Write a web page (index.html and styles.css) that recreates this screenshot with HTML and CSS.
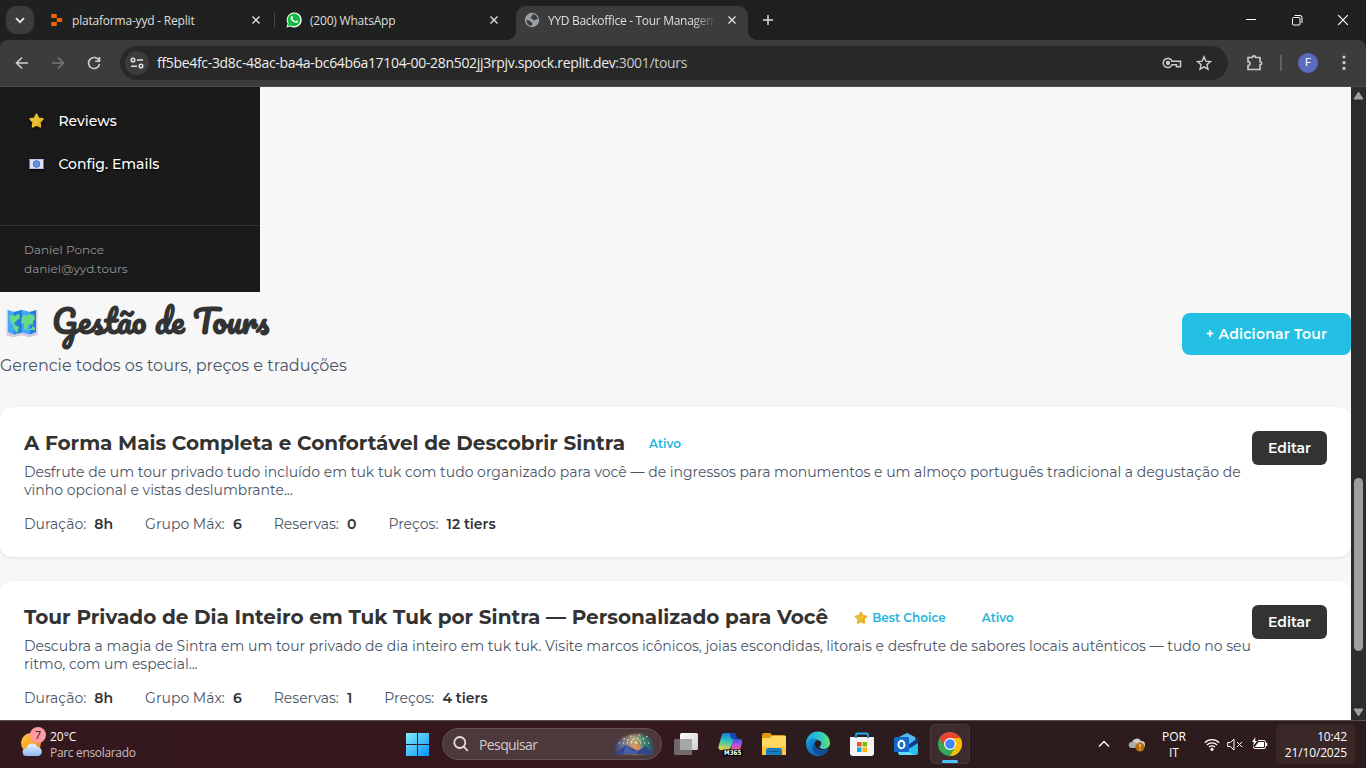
FILE: index.html
```html
<!DOCTYPE html>
<html lang="pt">
<head>
<meta charset="utf-8">
<title>YYD Backoffice - Tour Management</title>
<link rel="stylesheet" href="styles.css">
</head>
<body>
<svg class="defs" width="0" height="0">
  <defs>
    <symbol id="star" viewBox="0 0 16 16"><path d="M8 1.500 9.900 5.400l4.300.7-3 3.100.6 4.500L8 11.900l-3.800 1.800.6-4.500-3-3.100 4.300-.7z" fill="#ecc12f" stroke="#e6b92c" stroke-width="2" stroke-linejoin="round"/><path d="m12 6.200 3-.2-3.300 3.300.7 5L8 12.600" fill="#d79d2d" opacity=".4"/></symbol>
    <symbol id="x" viewBox="0 0 10 10"><path d="m1.500 1.500 7 7m0-7-7 7" stroke="currentColor" stroke-width="1.400"/></symbol>
  </defs>
</svg>
<header class="tabstrip">
  <div class="tab-search"><svg width="10" height="7" viewBox="0 0 10 7"><path d="m1 1.200 4 4 4-4" fill="none" stroke="#e6e6e6" stroke-width="1.800"/></svg></div>
  <div class="tab">
    <svg class="favicon small" viewBox="0 0 12 12"><path d="M1.200 0h3.600a1 1 0 0 1 1 1v3h-4.600a1 1 0 0 1-1-1V1a1 1 0 0 1 1-1M5.800 4h4.400a1 1 0 0 1 1 1v2a1 1 0 0 1-1 1H5.800M1.200 8h4.600v3a1 1 0 0 1-1 1H1.200a1 1 0 0 1-1-1V9a1 1 0 0 1 1-1" fill="#f26207"/></svg>
    <span class="tab-title t1">plataforma-yyd - Replit</span><svg class="close"><use href="#x"/></svg>
  </div>
  <i class="tab-sep"></i>
  <div class="tab second">
    <svg class="favicon" viewBox="0 0 16 16"><path d="M.5 15.500 1.600 11.500A7.500 7.500 0 1 1 4.600 14.500z" fill="#fff"/><path d="m1.800 14.200.8-3A6.300 6.300 0 1 1 4.900 13.400z" fill="#0fbd3d"/><path d="M5.500 4.200c.8-.7 1.200.2 1.500 1.100.1.500-.6.800-.5 1.200.7 1.400 1.500 2.100 2.900 2.700.5.100.8-.9 1.300-.8 1.800.8 1.600 1 .8 2.100C9.500 12 4.300 8.700 4.600 5.800c.1-.6.400-1.200.9-1.600" fill="#fff"/></svg>
    <span class="tab-title t2">(200) WhatsApp</span><svg class="close"><use href="#x"/></svg>
  </div>
  <div class="tab active">
    <svg class="favicon" viewBox="0 0 16 16"><circle cx="8" cy="8" r="7.200" fill="#9aa0a6"/><path d="M8.200 2.300c2.900 0 5.200 2 5.700 4.600-1 .7-2.300 0-2.600.9-.4 1.300-2.300.8-2.400-.6-.6-1-2.500-.3-2.400-1.700 0-1 1.600-.5 1.800-1.500zM2.300 8c2 .2 4.100.6 4.400 2 .4.900 2 .6 1.900 1.800-.1.900-1 1.200-1 2C4.600 13.600 2.300 11 2.300 8" fill="#3c3c3c"/></svg>
    <span class="tab-title fade t3">YYD Backoffice - Tour Managem</span><svg class="close"><use href="#x"/></svg>
  </div>
  <svg class="plus" viewBox="0 0 12 12"><path d="M6 1v10M1 6h10" stroke="#dcdcdc" stroke-width="1.500"/></svg>
  <div class="win">
    <svg width="12" height="12" viewBox="0 0 12 12"><path d="M1 5.500h10" stroke="#fff"/></svg>
    <svg width="12" height="12" viewBox="0 0 12 12" fill="none" stroke="#fff"><rect x="1.500" y="3.500" width="7.500" height="7.500" rx="1"/><path d="M3.500 1.500h5.500a2 2 0 0 1 2 2V9"/></svg>
    <svg width="12" height="12" viewBox="0 0 12 12"><path d="m1.200 1.200 9.600 9.600m0-9.600-9.600 9.600" stroke="#fff" stroke-width="1.200"/></svg>
  </div>
</header>
<div class="toolbar-back"><nav class="toolbar">
  <svg class="nav" viewBox="0 0 14 14" stroke="#d0d0d0"><path d="M13 7H1.500M7 1.500 1.500 7 7 12.500"/></svg>
  <svg class="nav" viewBox="0 0 14 14" stroke="#777"><path d="M1 7h11.500M7 1.500 12.500 7 7 12.500"/></svg>
  <svg class="nav" viewBox="0 0 14 14" stroke="#d0d0d0"><path d="M12 4.500A5.500 5.500 0 1 0 12.500 8M12.500 1v4.300H8.200"/></svg>
  <div class="omnibox">
    <span class="tune"><svg width="14" height="12" viewBox="0 0 14 12" fill="none" stroke="#e0e0e0" stroke-width="1.500"><circle cx="3" cy="3" r="1.800"/><path d="M7 3h6M1 9.200h6"/><circle cx="11" cy="9" r="1.800"/></svg></span>
    <span class="url">ff5be4fc-3d8c-48ac-ba4a-bc64b6a17104-00-28n502jj3rpjv.spock.replit.dev<em>:3001/tours</em></span>
    <svg class="key" viewBox="0 0 20 12" fill="none" stroke="#ccc" stroke-width="1.500"><path d="M10 4.200h8.500v5.600h-4v-2H10a4.600 4.600 0 1 1 0-3.600z"/><circle cx="6" cy="6" r="1.400" fill="#ccc"/></svg>
    <svg class="fav" viewBox="0 0 16 16" fill="none" stroke="#ccc" stroke-width="1.400"><path d="m8 1.800 1.800 4.300 4.700.4-3.600 3.100 1.100 4.600L8 11.800l-4 2.400 1.100-4.600-3.600-3.100 4.700-.4z"/></svg>
  </div>
  <svg class="ext" viewBox="0 0 18 18" fill="none" stroke="#ccc" stroke-width="1.600"><path d="M2 3.500h4.300a1.600 1.600 0 0 1 3.200 0H14v4.200a1.600 1.600 0 0 1 0 3.200V15.500H2v-3.900a2 2 0 0 0 0-4z"/></svg>
  <i class="bar-sep"></i><span class="avatar">F</span>
  <svg class="dots" viewBox="0 0 4 16" fill="#ccc"><circle cx="2" cy="2" r="1.600"/><circle cx="2" cy="7.700" r="1.600"/><circle cx="2" cy="13.400" r="1.600"/></svg>
</nav></div>
<div class="viewport">
  <div class="page">
    <aside class="sidebar">
      <ul class="menu">
        <li><svg class="emoji star"><use href="#star"/></svg><span>Reviews</span></li>
        <li><svg class="emoji" viewBox="0 0 16 16"><path d="M1 3h14v10H1z" fill="#e4dcf3"/><path d="M1 3h14v1H1zm0 9h14v1H1z" fill="#cdb9df"/><circle cx="8" cy="8" r="3.700" fill="#4d7fd0"/><circle cx="8" cy="8" r="1.500" fill="none" stroke="#94a9ea"/></svg><span>Config. Emails</span></li>
      </ul>
      <div class="user"><span>Daniel Ponce</span><span>daniel@yyd.tours</span></div>
    </aside>
    <main>
      <div class="head">
        <div>
          <h1><svg class="map" viewBox="0 0 32 28"><path d="m.5.800 7 2 8-2 8 2 8-2v25l-8 2.500-8-2-8 2-7-2z" fill="#d5c8e1"/><path d="m2 1 6 2v22.500L2 23zm14 0 8 2v22.500l-8-2z" fill="#43a9f4"/><path d="m8 3 8-2v22.500l-8 2zm16 0 6-2v22l-6 2.500z" fill="#2181df"/><path d="m3 7 4-1 3 1 1-2 3 1-1 4-2 1-1 2h-2l1 3 2 1 2 1-1 4-2 2-2-4-1-4-2-3-1-2zM16 8l2-2 3 1 3-2 4 1 1 4-2 2v3l-2 1-2-2-1 4-2 3-2-1v-5l-3-1zm8 12 2-1v-2l3 2v2h-5z" fill="#68d985"/></svg><span>Gestão de Tours</span></h1>
          <p class="sub">Gerencie todos os tours, preços e traduções</p>
        </div>
        <button class="add">+ Adicionar Tour</button>
      </div>
      <section class="card">
        <div class="title"><h2>A Forma Mais Completa e Confortável de Descobrir Sintra</h2><span class="tag">Ativo</span></div>
        <p class="desc">Desfrute de um tour privado tudo incluído em tuk tuk com tudo organizado para você — de ingressos para monumentos e um almoço português tradicional a degustação de<br>vinho opcional e vistas deslumbrante...</p>
        <div class="meta"><div>Duração: <b>8h</b></div><div>Grupo Máx: <b>6</b></div><div>Reservas: <b>0</b></div><div>Preços: <b>12 tiers</b></div></div>
        <button class="edit">Editar</button>
      </section>
      <section class="card">
        <div class="title"><h2>Tour Privado de Dia Inteiro em Tuk Tuk por Sintra — Personalizado para Você</h2><span class="tag best"><svg><use href="#star"/></svg>Best Choice</span><span class="tag">Ativo</span></div>
        <p class="desc">Descubra a magia de Sintra em um tour privado de dia inteiro em tuk tuk. Visite marcos icônicos, joias escondidas, litorais e desfrute de sabores locais autênticos — tudo no seu<br>ritmo, com um especial...</p>
        <div class="meta"><div>Duração: <b>8h</b></div><div>Grupo Máx: <b>6</b></div><div>Reservas: <b>1</b></div><div>Preços: <b>4 tiers</b></div></div>
        <button class="edit">Editar</button>
      </section>
    </main>
  </div>
  <div class="scroll"><svg width="11" height="9" viewBox="0 0 11 9"><path d="M5.500 1 10 8H1z" fill="#9f9f9f" stroke="#9f9f9f" stroke-linejoin="round"/></svg><i class="thumb"></i><svg width="11" height="9" viewBox="0 0 11 9"><path d="M5.500 8 10 1H1z" fill="#9f9f9f" stroke="#9f9f9f" stroke-linejoin="round"/></svg></div>
</div>
<footer class="taskbar">
  <div class="weather">
    <div class="wicon"><svg width="26" height="28" viewBox="0 0 26 28"><defs><linearGradient id="sun" y2="1"><stop stop-color="#ffc83c"/><stop offset="1" stop-color="#f5831f"/></linearGradient><linearGradient id="cl" x2="0" y2="1"><stop stop-color="#e9f3ff"/><stop offset="1" stop-color="#8fb6f2"/></linearGradient></defs><circle cx="11" cy="12" r="10" fill="url(#sun)"/><path d="M6.500 25a3.900 3.900 0 0 1 0-7.800 5.800 5.800 0 0 1 11-1.200A4.600 4.600 0 0 1 18.500 25z" fill="url(#cl)"/></svg><span class="badge">7</span></div>
    <div class="wtext"><span>20°C</span><span class="w2">Parc ensolarado</span></div>
  </div>
  <div class="apps">
    <svg class="start" viewBox="0 0 24 24"><defs><linearGradient id="win" x2="1" y2="1"><stop stop-color="#86eaff"/><stop offset="1" stop-color="#0795f5"/></linearGradient></defs><path d="M1 1h11v11H1zM13 1h11v11H13zM1 13h11v11H1zM13 13h11v11H13z" fill="url(#win)"/></svg>
    <div class="search">
      <svg width="16" height="16" viewBox="0 0 16 16" fill="none" stroke="#e5dfdf" stroke-width="1.800"><circle cx="6.800" cy="6.500" r="5.500"/><path d="m10.800 10.700 4 4.300"/></svg><span>Pesquisar</span>
      <svg class="art" viewBox="0 0 42 24"><defs><linearGradient id="sky"><stop stop-color="#34498a"/><stop offset=".5" stop-color="#c1a87c"/><stop offset=".75" stop-color="#378a78"/><stop offset="1" stop-color="#235a64"/></linearGradient><filter id="b"><feGaussianBlur stdDeviation="1.500"/></filter></defs><path d="M3 22 2 13 9 6l9-3 10-1 9 5 3 7-1 8z" fill="url(#sky)" filter="url(#b)"/><path d="m15 20 8-12 8 11z" fill="#f08b52" opacity=".7" filter="url(#b)"/><path d="m1 22 12-9 12 6 7-5 9 8z" fill="#34478c"/><path d="m13 13 7 6 7-1-4 4H10z" fill="#475eaa"/><g stroke="#fff4c8" stroke-width="1.200" stroke-dasharray="1.200 2.800"><path d="M23 11 16 2M23 11 27 1M23 11 35 4M23 11 38 11M23 11 9 6M23 11 5 11"/></g></svg>
    </div>
    <svg class="app task" viewBox="0 0 26 26"><defs><linearGradient id="tv" x2="1" y2="1"><stop stop-color="#fff"/><stop offset="1" stop-color="#ccc"/></linearGradient></defs><rect x="7" y="2" width="18" height="17" rx="1.500" fill="url(#tv)"/><rect x="1" y="8" width="18" height="16" rx="1.500" fill="#6e6a6a"/><path d="M7 8h12v11H7z" fill="#a7a6a6"/></svg>
    <svg class="app m365" viewBox="0 0 26 26"><defs><linearGradient id="cp1" x1=".5" x2=".3" y2="1"><stop stop-color="#1d75dc"/><stop offset=".45" stop-color="#2cc4bc"/><stop offset="1" stop-color="#ead53f"/></linearGradient><linearGradient id="cp2" x1=".4" x2=".5" y2="1"><stop stop-color="#2952dc"/><stop offset=".4" stop-color="#a855ed"/><stop offset=".7" stop-color="#eb5688"/><stop offset="1" stop-color="#fb9149"/></linearGradient></defs><path d="M7 2h9c2 0 3 1 2.300 3L14 16c-1 2-2 3-4 3H4c-2 0-3-2-2.400-4L4.500 5Q5.300 2 7 2" fill="url(#cp1)"/><path d="M13 2h4q2 0 2.500 3l1 3H16q-2 0-2.500-3z" fill="#1845ad"/><path d="M17 8h6q3 0 2 4l-2 7q-1 3-4 3h-8q2 0 2.800-3l2-8z" fill="url(#cp2)"/><rect x="6" y="18.500" width="19.500" height="6.500" fill="#000"/><text x="7" y="24.200" textLength="17.500" lengthAdjust="spacingAndGlyphs">M365</text></svg>
    <svg class="app" viewBox="0 0 26 26"><path d="M1 4q0-2 2-2h6l2 2h12q2 0 2 2v4H1z" fill="#dc9b0b"/><path d="M1 7h8l2-2h13q1 0 1 1v18H1z" fill="#ffd75e"/><path d="M1 23V16h24v7q0 1-1 1H2q-1 0-1-1" fill="#fdc93b"/><path d="M5 24v-5q0-2 2-2h12q2 0 2 2v5z" fill="#167dc3"/><path d="M8 20h10v1H8z" fill="#0a568c"/></svg>
    <svg class="app" viewBox="0 0 26 26"><defs><linearGradient id="e1" x2="1"><stop stop-color="#1aa7e4"/><stop offset=".65" stop-color="#36c9c8"/><stop offset="1" stop-color="#69e35f"/></linearGradient><linearGradient id="e2" y2="1" x2="1"><stop stop-color="#1797df"/><stop offset="1" stop-color="#0c4b9d"/></linearGradient></defs><path d="M1 13A12 12 0 0 1 25 12c0 4-3 6-7 6-3 0-4-2-3-3 3-3 0-6-3-6-5 0-9 2-11 5" fill="url(#e1)"/><path d="M1 14C2 8 9 6 13 9c-5 0-5 10 4 10 3 0 6-1 7-1A12 12 0 0 1 1 14" fill="url(#e2)"/><path d="M9 12c-4 6 1 12 7 12 4-1 6-3 8-6-7 4-15 2-15-6" fill="#124e98"/></svg>
    <svg class="app" viewBox="0 0 26 26"><path d="M7 8V4q0-1.500 1.500-1.500h9Q19 2.500 19 4v4" fill="none" stroke="#20aef0" stroke-width="2"/><path d="M1 6h24v16q0 3-3 3H4q-3 0-3-3z" fill="#f4f4f4"/><path d="M6 7V4h2v3zM18 7V4h2v3z" fill="#168bd0"/><path d="M8 11h4.500v4.500H8z" fill="#f25022"/><path d="M13.500 11H18v4.500h-4.500z" fill="#7fba00"/><path d="M8 16.500h4.500V21H8z" fill="#00a4ef"/><path d="M13.500 16.500H18V21h-4.500z" fill="#ffb900"/></svg>
    <svg class="app" viewBox="0 0 26 26"><path d="m5 7 9-5 11 6v15q0 1-2 1H7q-2 0-2-2z" fill="#1266b5"/><path d="m6 6 8-4 8 4v9H6z" fill="#54b8ed"/><path d="m6 23 19-11v9q0 3-3 3H7z" fill="#29bdf0"/><path d="m5 16 17 8H8q-3 0-3-3z" fill="#61ddfc"/><path d="m15 14 10-7v5l-8 5z" fill="#123d85"/><rect x="1" y="6" width="15" height="15" rx="1.500" fill="#1069c7"/><ellipse cx="8.500" cy="13.500" rx="3" ry="3.700" fill="none" stroke="#fff" stroke-width="2"/></svg>
    <div class="chrome"><svg viewBox="0 0 26 26"><circle cx="13" cy="13" r="12" fill="#34a853"/><path d="M13 13 2.600 7A12 12 0 0 1 23.400 7z" fill="#ea4335"/><path d="M13 7h10.400A12 12 0 0 1 13 25l5.200-9z" fill="#fbbc05"/><path d="M2.600 7 8 16l5-9z" fill="#ea4335"/><circle cx="13" cy="13" r="6" fill="#fff"/><circle cx="13" cy="13" r="4.800" fill="#4285f4"/></svg></div>
  </div>
  <div class="tray">
    <svg class="chev" viewBox="0 0 12 8" fill="none" stroke="#fff" stroke-width="1.400"><path d="m1 6.500 5-5 5 5"/></svg>
    <svg class="cloud" viewBox="0 0 17 15"><path d="M4 11a3.500 3.500 0 0 1 0-6 5 5 0 0 1 9-1 3.500 3.500 0 0 1 1 7z" fill="#d0cece"/><path d="M4 11a3 3 0 0 1-.5-6Q7 4 9 7l3 4z" fill="#aaa"/><circle cx="12" cy="10" r="4.500" fill="#b76b08"/><path d="M12 7v3.500M12 12v1" stroke="#fff"/></svg>
    <div class="lang"><span>POR</span><span>IT</span></div>
    <svg class="wifi" viewBox="0 0 16 13" fill="none" stroke="#fff" stroke-width="1.200"><path d="M.8 4.700a10.200 10.200 0 0 1 14.400 0M2.900 7a7.200 7.200 0 0 1 10.200 0M5 9.200a4.200 4.200 0 0 1 6 0"/><circle cx="8" cy="11.300" r="1" fill="#fff"/></svg>
    <svg class="mute" viewBox="0 0 16 13" fill="none" stroke="#fff"><path d="M.7 4.500h2.800L7 1v11L3.500 8.500H.7zM10 4l5 5m0-5-5 5"/></svg>
    <svg class="batt" viewBox="0 0 17 14"><path d="M7 3.500h6q1.500 0 1.500 1.500v5q0 1.500-1.500 1.500H4q-1.500 0-1.500-1.500V9.500" fill="none" stroke="#fff"/><path d="M7.500 5H13v5H4V9.500zM15 6h1.300v3H15M4.500 0 1 5h2L2 9l4-5H4z" fill="#fff"/></svg>
    <div class="clock"><span>10:42</span><span>21/10/2025</span></div>
  </div>
</footer>
</body>
</html>
```
FILE: styles.css
```css
* { box-sizing: border-box; }
body { margin: 0; width: 1366px; height: 768px; overflow: hidden; display: flex; flex-direction: column; background: #1f2120; font-family: Montserrat, Inter, sans-serif; }
svg { flex: none; display: block; }
span { white-space: nowrap; }
.defs { position: absolute; }
.tabstrip { height: 40px; display: flex; align-items: center; padding-left: 6px; background: #1f2120; color: #dedede; font: 12px "Open Sans", sans-serif; }
.tab-search { width: 28px; height: 28px; border-radius: 10px; background: #3c3c3c; display: grid; place-items: center; margin-right: 6px; }
.tab { width: 234px; height: 34px; display: flex; align-items: center; padding: 0 13px 0 10px; }
.tab.second { width: 240px; padding-left: 11px; padding-right: 16px; }
.tab.active { width: 232px; background: #3c3c3c; border-radius: 10px 10px 0 0; align-self: flex-end; padding: 0 11px 6px 8px; margin: 0 1px; position: relative; }
.tab.active::before, .tab.active::after { content: ""; position: absolute; bottom: 0; width: 10px; height: 10px; }
.tab.active::before { left: -10px; background: radial-gradient(circle at 0 0, transparent 10px, #3c3c3c 10.500px); }
.tab.active::after { right: -10px; background: radial-gradient(circle at 100% 0, transparent 10px, #3c3c3c 10.500px); }
.favicon { width: 16px; height: 16px; margin-right: 8px; }
.favicon.small { width: 12px; height: 12px; margin: 0 10px 0 1px; }
.small + .tab-title { margin-left: -1px; }
.tab-title { flex: 1; overflow: hidden; line-height: 16px; padding-top: 2px; }
.active .tab-title { flex: 0 0 170px; margin-right: auto; }
.t1 { letter-spacing: -.2px; }
.t2 { letter-spacing: -.2px; }
.t3 { letter-spacing: -.3px; }
.fade { mask-image: linear-gradient(to right, #000 85%, transparent 99%); }
.close { width: 10px; height: 10px; }
.tab-sep { width: 1px; height: 16px; background: #454545; }
.plus { width: 12px; height: 12px; margin-left: 13px; }
.win { margin-left: auto; display: flex; gap: 34px; padding-right: 17px; }
.toolbar-back { background: #1f2120; }
.toolbar { height: 47px; background: #3c3c3c; border-bottom: 1px solid #4b4b4b; border-radius: 8px 8px 0 0; display: flex; align-items: center; padding-left: 15px; }
.nav { width: 14px; height: 14px; fill: none; stroke-width: 1.600; margin-right: 22px; }
.omnibox { width: 1108px; height: 34px; margin-left: -3px; background: #282828; border-radius: 17px; display: flex; align-items: center; padding: 0 16px 0 5px; }
.tune { width: 24px; height: 24px; border-radius: 50%; background: #3c3c3c; display: grid; place-items: center; margin-right: 8px; }
.url { font: 14px "Open Sans", sans-serif; color: #eee; letter-spacing: -.32px; flex: 1; padding-bottom: 1px; }
.url em { font-style: normal; color: #c7c7c7; }
.key { width: 20px; height: 12px; margin-right: 14px; }
.fav { width: 16px; height: 16px; }
.ext { width: 18px; height: 18px; margin-left: 18px; }
.bar-sep { width: 2px; height: 16px; margin: 0 16px; background: #606060; }
.avatar { width: 20px; height: 20px; border-radius: 50%; background: #5c6bc0; color: #fff; font: 11px/20px Roboto, sans-serif; text-align: center; }
.dots { width: 4px; height: 16px; margin-left: 24px; }
.viewport { height: 633px; display: flex; overflow: hidden; }
.page { width: 1351px; background: #f7f7f7; }
.sidebar { width: 260px; height: 205px; background: #1a1a1a; display: flex; flex-direction: column; }
.menu { list-style: none; margin: 0; padding: 12px 28px; height: 138px; }
.menu li { height: 43px; display: flex; align-items: center; gap: 13.400px; color: #fff; font-size: 14px; font-weight: 500; text-shadow: 0 1px 2px #000; }
.emoji { width: 17px; height: 16px; filter: drop-shadow(0 1px 1px #000); }
.user { height: 67px; border-top: 1px solid #333; padding: 14px 24px; display: flex; flex-direction: column; font-size: 12px; line-height: 19px; color: #949494; }
.head { height: 115px; display: flex; justify-content: space-between; }
h1 { margin: 0; height: 63px; display: flex; align-items: center; padding: 0 0 2px 6px; font: 700 32px/56px Pacifico, Lato, sans-serif; color: #333; }
.map { width: 32px; height: 28px; margin-right: 14px; }
h1 span { margin-top: -6px; }
.sub { margin: 0; font-size: 16px; line-height: 22px; color: #4a5568; white-space: nowrap; }
button { border: 0; color: #fff; font-family: inherit; font-size: 14px; font-weight: 600; white-space: nowrap; padding: 0; }
.add { width: 169px; height: 42px; margin-top: 21px; background: #23c0e4; border-radius: 8px; letter-spacing: .25px; }
.card { height: 150px; margin-bottom: 24px; background: #fff; border-radius: 12px; box-shadow: 0 1px 3px #00000019; display: grid; grid-template-columns: 1fr 75px; grid-template-rows: 34px 56px 20px; padding: 24px; }
.title { display: flex; align-items: center; height: 24px; }
h2 { margin: 0; font-size: 20px; line-height: 24px; font-weight: 700; color: #333; white-space: nowrap; }
.tag { color: #23b5dc; font-size: 12px; font-weight: 600; margin-left: 24px; padding-top: 1px; }
.tag.best { display: flex; align-items: center; gap: 4px; margin-left: 26px; margin-right: 12px; }
.best svg { width: 14px; height: 14px; }
.desc { grid-row: 2; grid-column: 1; margin: -2px 0 0; font-size: 14px; line-height: 18px; color: #4a5568; white-space: nowrap; }
.meta { grid-row: 3; grid-column: 1; display: flex; gap: 32px; font-size: 14px; line-height: 17px; color: #4a5568; margin-top: -14px; padding-top: 1px; align-items: center; }
.meta b { font-weight: 600; color: #333; margin-left: 4.500px; }
.edit { grid-row: 1; grid-column: 2; height: 34px; background: #333; border-radius: 6px; }
.scroll { width: 15px; background: #2c2c2c; display: flex; flex-direction: column; align-items: center; padding: 4px 0 3px; }
.thumb { width: 9px; height: 173px; margin-top: 378px; margin-bottom: auto; border-radius: 5px; background: #9f9f9f; }
.taskbar { height: 48px; border-top: 1px solid #5a5052; background: linear-gradient(to right, #33181e, #36181e 45%, #2d1c1d 58%, #2e1c1d); color: #fff; font: 12px "Open Sans", sans-serif; display: flex; padding-bottom: 1px; }
.weather { width: 405px; display: flex; align-items: center; padding-left: 20px; }
.wicon { position: relative; width: 30px; padding-top: 1px; }
.badge { position: absolute; left: 10px; top: -3px; width: 16px; height: 16px; border-radius: 50%; background: #ff99a4; color: #222; font-size: 11px; line-height: 16px; text-align: center; }
.wtext, .lang, .clock { display: flex; flex-direction: column; line-height: 16px; padding-top: 2px; }
.w2 { color: #c9bfc0; letter-spacing: -.33px; }
.apps { width: 566px; display: flex; align-items: center; }
.start { width: 24px; height: 24px; margin-right: 13px; }
.search { width: 220px; height: 32px; border: 1px solid #655052; border-radius: 16px; background: #4d383b; display: flex; align-items: center; padding: 0 6px 0 10px; color: #d5cbcc; font-size: 14px; margin-right: 11px; }
.search span { flex: 1; margin-left: 10px; letter-spacing: -.6px; }
.art { width: 42px; height: 24px; }
.app { width: 26px; height: 26px; margin-right: 18px; }
.m365 text { font: 700 6.500px "DejaVu Sans", sans-serif; fill: #fff; }
.chrome { width: 40px; height: 40px; margin-left: -7px; background: #3d2b2d; border: 1px solid #493738; border-radius: 5px; display: flex; flex-direction: column; align-items: center; padding-top: 6px; position: relative; }
.chrome svg { width: 26px; height: 26px; }
.chrome::after { content: ""; position: absolute; bottom: 0; width: 16px; height: 3px; border-radius: 2px; background: #4cc2ff; }
.tray { margin-left: auto; display: flex; align-items: center; }
.chev { width: 12px; height: 8px; margin-right: 18px; }
.cloud { width: 17px; height: 15px; margin-right: 17px; }
.lang { width: 24px; text-align: center; align-items: center; margin-right: 18px; }
.wifi { width: 16px; height: 13px; margin-right: 7px; }
.mute { width: 16px; height: 13px; margin-right: 8px; }
.batt { width: 17px; height: 14px; margin-right: 8px; }
.clock { width: 79px; height: 40px; justify-content: center; border-radius: 5px; background: #3a2829; padding-right: 8px; text-align: right; margin-right: 11px; letter-spacing: -.15px; }
```
